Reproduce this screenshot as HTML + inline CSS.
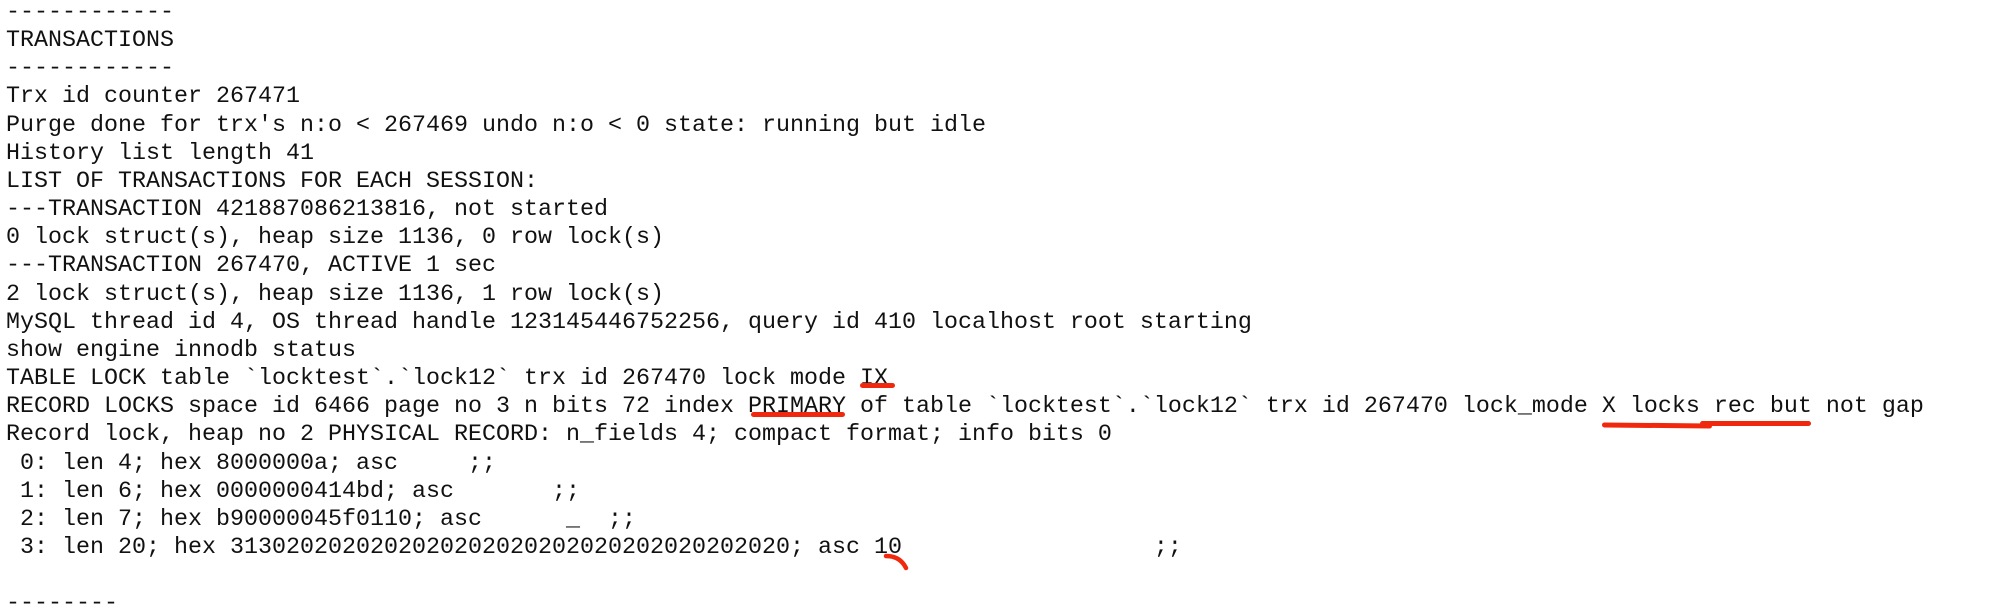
<!DOCTYPE html>
<html><head><meta charset="utf-8"><style>
html,body{margin:0;padding:0;background:#fff;width:2016px;height:614px;overflow:hidden;position:relative}
pre{position:absolute;left:6px;top:-1px;margin:0;font-family:"Liberation Mono",monospace;font-size:23.33px;line-height:28.15px;color:#111;white-space:pre}
.r{position:absolute;background:#f0290e;border-radius:3px}
</style></head><body>
<pre>------------
TRANSACTIONS
------------
Trx id counter 267471
Purge done for trx's n:o &lt; 267469 undo n:o &lt; 0 state: running but idle
History list length 41
LIST OF TRANSACTIONS FOR EACH SESSION:
---TRANSACTION 421887086213816, not started
0 lock struct(s), heap size 1136, 0 row lock(s)
---TRANSACTION 267470, ACTIVE 1 sec
2 lock struct(s), heap size 1136, 1 row lock(s)
MySQL thread id 4, OS thread handle 123145446752256, query id 410 localhost root starting
show engine innodb status
TABLE LOCK table `locktest`.`lock12` trx id 267470 lock mode IX
RECORD LOCKS space id 6466 page no 3 n bits 72 index PRIMARY of table `locktest`.`lock12` trx id 267470 lock_mode X locks rec but not gap
Record lock, heap no 2 PHYSICAL RECORD: n_fields 4; compact format; info bits 0
 0: len 4; hex 8000000a; asc     ;;
 1: len 6; hex 0000000414bd; asc       ;;
 2: len 7; hex b90000045f0110; asc      _  ;;
 3: len 20; hex 3130202020202020202020202020202020202020; asc 10                  ;;

--------</pre>
<div class="r" style="left:860px;top:383px;width:35px;height:5px"></div>
<div class="r" style="left:751px;top:412px;width:94px;height:5px"></div>
<div class="r" style="left:1602px;top:423px;width:110px;height:5px;transform:rotate(0.6deg)"></div>
<div class="r" style="left:1700px;top:421px;width:111px;height:5px"></div>
<svg style="position:absolute;left:880px;top:550px" width="36" height="24"><path d="M6 6 Q20 6 26 18" stroke="#f0290e" stroke-width="4.5" fill="none" stroke-linecap="round"/></svg>
</body></html>
